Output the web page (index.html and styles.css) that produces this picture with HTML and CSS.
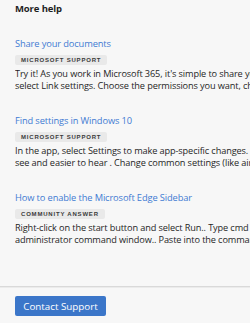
FILE: index.html
```html
<!DOCTYPE html>
<html lang="en">
<head>
    <meta charset="UTF-8" />
    <title>More help</title>
    <link rel="stylesheet" href="styles.css">
</head>
<body>
    <div class="panel">
        <div class="content">
            <h2 class="title">More help</h2>
            <ul class="list">
                <li class="item">
                    <a class="link" href="#">Share your documents</a>
                    <span class="badge">Microsoft support</span>
                    <p class="text">
                        <span>Try it! As you work in Microsoft 365, it's simple to share your documents with others. Select Share, then</span>
                        <span>select Link settings. Choose the permissions you want, choose who to share with, and select Send.</span>
                    </p>
                </li>
                <li class="item">
                    <a class="link" href="#">Find settings in Windows 10</a>
                    <span class="badge">Microsoft support</span>
                    <p class="text">
                        <span>In the app, select Settings to make app-specific changes. Learn how to make Windows easier to</span>
                        <span>see and easier to hear . Change common settings (like airplane mode, Wi-Fi, and more).</span>
                    </p>
                </li>
                <li class="item">
                    <a class="link" href="#">How to enable the Microsoft Edge Sidebar</a>
                    <span class="badge">Community answer</span>
                    <p class="text">
                        <span>Right-click on the start button and select Run.. Type cmd and press Ctrl+Shift+Enter to open an</span>
                        <span>administrator command window.. Paste into the command window and press Enter.</span>
                    </p>
                </li>
            </ul>
        </div>
        <div class="footer">
            <button class="btn">Contact Support</button>
        </div>
    </div>
</body>
</html>
```

FILE: styles.css
```css
*{
    margin:0;
    padding:0;
    list-style:none;
    box-sizing:border-box;
}
html,body{
    height:100%;
}
body{
    background:#f7f7f7;
    color:#1f1f1f;
    font-family:"Open Sans","Noto Sans",sans-serif;
    font-size:9.2px;
    letter-spacing:-.12px;
    overflow:hidden;
}
.panel{
    height:100%;
    display:flex;
    flex-direction:column;
}
.content{
    flex:1;
    padding:3px 0 0 15px;
    overflow:hidden;
}
.title{
    font-size:9.5px;
    font-weight:700;
    line-height:12px;
    margin-bottom:23px;
}
.list{
    display:flex;
    flex-direction:column;
    gap:23px;
}
.item{
    display:flex;
    flex-direction:column;
    align-items:flex-start;
}
.link{
    color:#3f7bd3;
    text-decoration:none;
    font-size:9.3px;
    line-height:12px;
    margin-bottom:5px;
}
.badge{
    height:10px;
    line-height:10px;
    padding:0 6px;
    background:#e9e9e9;
    border-radius:2px;
    color:#3a3a3a;
    font-family:"Liberation Sans",sans-serif;
    font-size:6px;
    font-weight:700;
    letter-spacing:.8px;
    text-transform:uppercase;
    margin-bottom:3px;
}
.text{
    width:100%;
    line-height:12px;
    overflow:hidden;
}
.text span{
    display:block;
    white-space:nowrap;
}
.footer{
    border-top:1px solid #d9d9d9;
    box-shadow:inset 0 1px 0 #ebebeb;
    padding:9px 15px 7px;
    flex-shrink:0;
}
.btn{
    width:91px;
    height:20px;
    background:#3b76c9;
    color:#fff;
    border:0;
    border-radius:2px;
    font-family:"Open Sans","Noto Sans",sans-serif;
    font-size:9.8px;
    cursor:pointer;
}
```
